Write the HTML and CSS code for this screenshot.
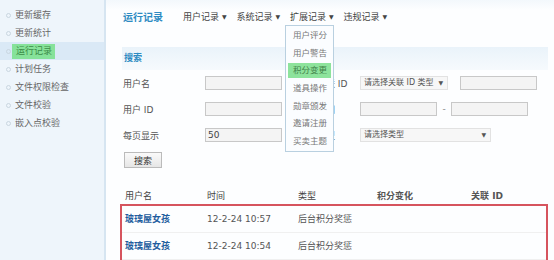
FILE: index.html
```html
<!DOCTYPE html>
<html lang="zh-CN">
<head>
    <meta charset="UTF-8">
    <title>运行记录</title>
    <link rel="stylesheet" href="styles.css">
</head>
<body>
    <div class="page">
        <!-- Seitenleiste -->
        <ul class="side-menu">
            <li>更新缓存</li>
            <li>更新统计</li>
            <li class="active"><span>运行记录</span></li>
            <li>计划任务</li>
            <li>文件权限检查</li>
            <li>文件校验</li>
            <li>嵌入点校验</li>
        </ul>

        <div class="main">
            <!-- Navigation -->
            <div class="top-nav">
                <span class="nav-title">运行记录</span>
                <span class="nav-item">用户记录 <i>▼</i></span>
                <span class="nav-item">系统记录 <i>▼</i></span>
                <span class="nav-item">扩展记录 <i>▼</i>
                    <ul class="drop-menu">
                        <li>用户评分</li>
                        <li>用户警告</li>
                        <li class="current">积分变更</li>
                        <li>道具操作</li>
                        <li>勋章颁发</li>
                        <li>邀请注册</li>
                        <li>买卖主题</li>
                    </ul>
                </span>
                <span class="nav-item">违规记录 <i>▼</i></span>
            </div>

            <div class="search-head">搜索</div>

            <div class="search-form">
                <label>用户名</label>
                <div><input class="field" type="text"></div>
                <label>关联 ID</label>
                <div class="field-group">
                    <div class="select w-88">请选择关联 ID 类型 <i>▼</i></div>
                    <input class="field" type="text">
                </div>

                <label>用户 ID</label>
                <div><input class="field" type="text"></div>
                <label>时间</label>
                <div class="field-group">
                    <input class="field" type="text">
                    <span class="dash">-</span>
                    <input class="field" type="text">
                </div>

                <label>每页显示</label>
                <div><input class="field" type="text" value="50"></div>
                <label>类型</label>
                <div class="field-group">
                    <div class="select w-130">请选择类型 <i>▼</i></div>
                </div>
            </div>

            <button class="search-button">搜索</button>

            <!-- Ergebnisliste -->
            <div class="result-head">
                <span>用户名</span>
                <span>时间</span>
                <span>类型</span>
                <span class="strong">积分变化</span>
                <span class="strong">关联 ID</span>
            </div>
            <div class="result-box">
                <div class="result-row">
                    <a>玻璃屋女孩</a>
                    <span>12-2-24 10:57</span>
                    <span>后台积分奖惩</span>
                    <span></span>
                    <span></span>
                </div>
                <div class="result-row">
                    <a>玻璃屋女孩</a>
                    <span>12-2-24 10:54</span>
                    <span>后台积分奖惩</span>
                    <span></span>
                    <span></span>
                </div>
            </div>
        </div>
    </div>
</body>
</html>
```

FILE: styles.css
```css
/* Grundlayout */
body { margin: 0; padding: 0; font-family: "DejaVu Sans", "Noto Sans CJK SC", sans-serif; font-size: 9px; color: #555; background: #fdfeff; overflow: hidden; }
.page { display: flex; height: 260px; }

/* Seitenleiste */
.side-menu { list-style: none; margin: 0; padding: 6px 0 0 0; width: 106px; background: #eef5fb; border-right: 2px solid #d6e5f1; box-sizing: border-box; flex-shrink: 0; }
.side-menu li { position: relative; height: 18px; line-height: 18px; padding-left: 15px; color: #666; }
.side-menu li::before { content: ""; position: absolute; left: 6px; top: 7px; width: 3px; height: 3px; border: 1px solid #c9d6e0; border-radius: 50%; }
.side-menu li.active { background: #dae9f6; }
.side-menu li.active span { display: inline-block; background: #86e29a; color: #3c8c48; padding: 0 3px 0 4px; margin-left: -3px; line-height: 15px; }

/* Hauptbereich */
.main { flex: 1; display: flex; flex-direction: column; padding-left: 17px; background: linear-gradient(#f3f8fc, #fdfeff 10px); }
.top-nav { display: flex; align-items: center; height: 36px; }
.nav-title { font-size: 10px; font-weight: bold; color: #2e8bc2; width: 60px; }
.nav-item { color: #444; margin-right: 10px; position: relative; }
.nav-item i { font-style: normal; font-size: 6px; vertical-align: 1px; }
.drop-menu { list-style: none; margin: 0; padding: 1px 2px; position: absolute; left: -5px; top: 15px; width: 43px; background: #fbfdff; border: 1px solid #b9d0e0; }
.drop-menu li { height: 17.5px; line-height: 17.5px; padding-left: 5px; color: #777; font-size: 8.5px; }
.drop-menu li.current { background: #8de39c; color: #3f7f48; height: 15px; line-height: 15px; margin: 1px 0 2px 0; }

.search-head { margin: 14px 6px 0 -1px; height: 23px; line-height: 23px; padding-left: 2px; font-weight: bold; color: #2e8bc2; background: linear-gradient(#eaf3fa, #f6fafd); }

.search-form { display: grid; grid-template-columns: 82px 112px 43px auto; grid-auto-rows: 26px; align-items: center; }
.search-form label { color: #555; }
.field { display: block; height: 14px; box-sizing: border-box; border: 1px solid #c8c8c8; background: #f4f4f4; font-family: inherit; font-size: 9px; color: #444; padding: 0 2px; margin: 0; width: 77px; }
.field-group { display: flex; align-items: center; }
.select { height: 14px; line-height: 12px; box-sizing: border-box; border: 1px solid #e2e2e2; background: #f7f7f7; color: #555; font-size: 8px; white-space: nowrap; padding-left: 3px; display: flex; justify-content: space-between; margin-right: 12px; }
.select i { font-style: normal; font-size: 6px; padding-right: 4px; }
.w-88 { width: 88px; }
.w-130 { width: 131px; }
.dash { width: 14px; text-align: center; color: #888; }

.search-button { align-self: flex-start; margin: 4px 0 0 1px; width: 38px; height: 17px; padding: 0; border: 1px solid #bbb; background: linear-gradient(#fafafa, #e6e6e6); font-family: inherit; font-size: 9px; color: #333; }

/* Ergebnisliste */
.result-head, .result-row { display: grid; grid-template-columns: 82px 91px 79px 94px auto; padding-left: 3px; }
.result-head { margin-top: 21px; height: 14px; line-height: 14px; color: #444; margin-left: -1px; }
.result-head .strong { font-weight: bold; color: #555; }
.result-box { border: 2px solid #d6545e; border-bottom: none; margin: 1px 6px 0 -3px; }
.result-row { height: 26px; line-height: 27px; border-bottom: 1px solid #f0f0f0; }
.result-row a { color: #1f5d9e; font-weight: bold; }
```
